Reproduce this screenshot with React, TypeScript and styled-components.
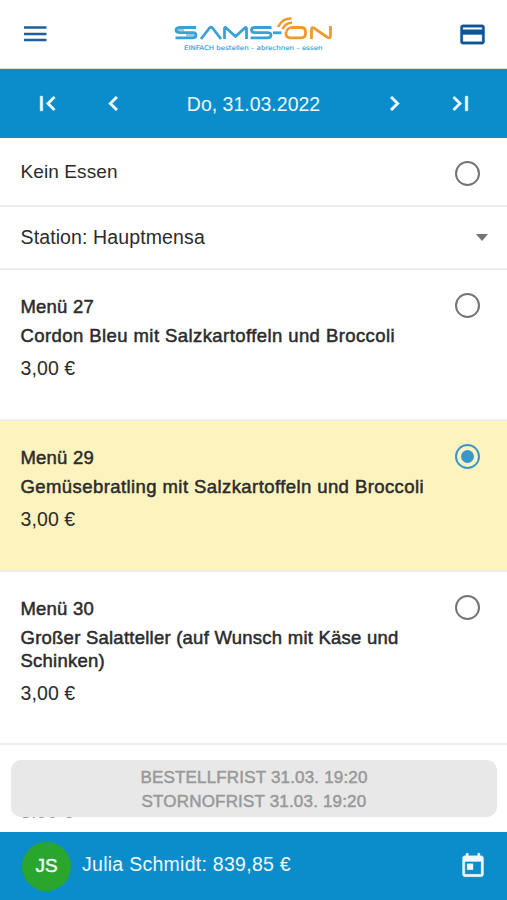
import React from "react";
import styled, { createGlobalStyle } from "styled-components";

const Global = createGlobalStyle`
  * { box-sizing: border-box; }
  body { margin: 0; background: #fff; font-family: "Liberation Sans", Arial, sans-serif; color: #2b2b2b; }
`;

const Screen = styled.div`
  width: 507px;
  height: 900px;
  display: flex;
  flex-direction: column;
  overflow: hidden;
  background: #fff;
`;

const Header = styled.header`
  flex: none;
  height: 69px;
  display: flex;
  align-items: center;
  justify-content: space-between;
  padding: 0 20.5px 0 22px;
  border-bottom: 1px solid #d9e2e2;
`;

const Logo = styled.svg`
  display: block;
  width: 164px;
  height: 42px;
  margin-left: 5px;
`;

const Icon = styled.svg<{ $size: number }>`
  display: block;
  flex: none;
  width: ${(p) => p.$size}px;
  height: ${(p) => p.$size}px;
`;

const DateBar = styled.nav`
  flex: none;
  height: 69px;
  display: grid;
  grid-template-columns: 66px 66px 1fr 66px 66px;
  align-items: center;
  justify-items: center;
  padding: 0 14px;
  background: #0c8dcb;
  color: #eefaff;
`;

const Label = styled.span<{ $size?: number; $track?: number; $strong?: boolean }>`
  display: block;
  white-space: nowrap;
  font-size: ${(p) => p.$size ?? 19}px;
  letter-spacing: ${(p) => p.$track ?? 0}px;
  -webkit-text-stroke: ${(p) => (p.$strong ? "0.5px currentColor" : "0")};
`;

const DateLabel = styled(Label)`
  padding: 1px 0 0 0;
`;

const List = styled.main`
  flex: 1;
  min-height: 0;
  overflow: hidden;
`;

const OptionRow = styled.div<{ $height: number; $inset: number }>`
  height: ${(p) => p.$height}px;
  display: flex;
  align-items: center;
  justify-content: space-between;
  padding: 0 ${(p) => p.$inset}px 0 20.5px;
  border-bottom: 2px solid #ededed;
`;

const MenuRow = styled.article<{ $height: number; $selected?: boolean }>`
  height: ${(p) => p.$height}px;
  display: flex;
  justify-content: space-between;
  align-items: flex-start;
  padding: 22px 25px 0 20.5px;
  border-bottom: 2px solid #ededed;
  background: ${(p) => (p.$selected ? "#fdf3bf" : "#fff")};
`;

const MenuText = styled.div`
  padding-top: 3px;
`;

const Title = styled(Label)`
  line-height: 23px;
  margin-bottom: 6px;
`;

const Dish = styled(Label)`
  line-height: 23px;
`;

const Price = styled(Label)`
  line-height: 23px;
  margin-top: 10px;
`;

const Radio = styled.span<{ $on?: boolean; $top?: number }>`
  flex: none;
  display: grid;
  place-items: center;
  width: 25px;
  height: 25px;
  margin: ${(p) => p.$top ?? 1}px 2px 0 0;
  border: 2.5px solid ${(p) => (p.$on ? "#3997cb" : "#747474")};
  border-radius: 50%;

  &::after {
    content: "";
    width: 13px;
    height: 13px;
    border-radius: 50%;
    background: ${(p) => (p.$on ? "#3997cb" : "transparent")};
  }
`;

const Caret = styled.span`
  border: 7px solid transparent;
  border-width: 7px 6.5px 0;
  border-top-color: #747474;
`;

const BottomArea = styled.section`
  position: relative;
  flex: none;
  height: 87px;
  padding: 15px 10px 0 11px;

  &::after {
    content: "";
    position: absolute;
    inset: auto 0 0 0;
    height: 14px;
    background: #fff;
  }
`;

const Deadline = styled.button`
  position: relative;
  display: flex;
  flex-direction: column;
  align-items: center;
  justify-content: center;
  width: 100%;
  height: 57px;
  padding: 2px 0 0;
  border: 0;
  border-radius: 10px;
  background: #e8e8e8;
  color: #999;
  font-family: inherit;
  line-height: 24px;
`;

const CoveredPrice = styled(Label)`
  position: absolute;
  left: 20.5px;
  bottom: 9px;
  line-height: 22px;
  color: #999;
`;

const Footer = styled.footer`
  flex: none;
  height: 68px;
  display: flex;
  align-items: center;
  padding: 0 20.5px 0 22px;
  background: #0c8dcb;
  color: #eefaff;
`;

const Avatar = styled.span`
  display: grid;
  place-items: center;
  width: 49px;
  height: 49px;
  margin-right: 11px;
  border-radius: 50%;
  background: #2aa52d;
`;

const Balance = styled(Label)`
  flex: 1;
  padding-bottom: 4px;
`;

const Calendar = styled(Icon)`
  margin-bottom: 2px;
`;

type Menu = { title: string; dish: string[]; track: number; height: number; on: boolean };

const menus: Menu[] = [
  { title: "Menü 27", dish: ["Cordon Bleu mit Salzkartoffeln und Broccoli"], track: 0.42, height: 151, on: false },
  { title: "Menü 29", dish: ["Gemüsebratling mit Salzkartoffeln und Broccoli"], track: 0.42, height: 151, on: true },
  { title: "Menü 30", dish: ["Großer Salatteller (auf Wunsch mit Käse und", "Schinken)"], track: 0.24, height: 173, on: false },
];

const Chevron = ({ flip, bar }: { flip?: boolean; bar?: boolean }) => (
  <Icon $size={29} viewBox="0 0 24 24">
    <g transform={flip ? "translate(24 0) scale(-1 1)" : undefined}>
      <path
        fill="currentColor"
        stroke="currentColor"
        strokeWidth="0.5"
        d={bar ? "M18.41 16.59 13.82 12l4.59-4.59L17 6l-6 6 6 6zM6 6h2v12H6z" : "M15.41 7.41 14 6l-6 6 6 6 1.41-1.41L10.83 12z"}
      />
    </g>
  </Icon>
);

const Brand = () => (
  <Logo viewBox="0 0 164 42" fill="none">
    <g stroke="#3ba0d5" strokeWidth="2.8" strokeLinejoin="round">
      <path d="M23 14.500H7Q3 14.500 3 17T7 19.600H20Q23 19.600 23 22.200T20 24.800H2.500" />
      <path d="M3 17H11M13 22.200H22" strokeWidth="2.400" opacity="0.550" />
      <path d="M28 26L36.500 15Q38 13.500 39.500 15L48 26" />
      <path d="M51.500 26V16Q51.500 13.500 53.500 15.200L62.500 23.500L71.500 15.200Q73.500 13.500 73.500 16V26" />
      <path d="M98.500 14.500H82Q78.500 14.500 78.500 17T82 19.600H94.500Q98 19.600 98 22.200T94.500 24.800H77.500" />
      <path d="M100 19.800h8.500" />
    </g>
    <g stroke="#f09a2b" strokeWidth="2.8" strokeLinejoin="round">
      <path d="M119 14.500H128Q132.500 14.500 132.500 18.500V20.800Q132.500 24.800 128 24.800H117.500Q113 24.800 113 20.800V18.500" />
      <path d="M138.500 26V16.500Q138.500 13.500 141 15.200L154 24Q157.500 26 157.500 22.800V13" />
      <path d="M105 14Q109.500 5 118.500 5.500M109.500 16Q112.500 9.700 119 9.700M113.500 18.500Q114.500 14.500 119.500 14.500" strokeWidth="2.500" />
    </g>
    <text x="11" y="36.500" fill="#3ba0d5" stroke="#3ba0d5" strokeWidth="0.150" fontFamily="DejaVu Sans, sans-serif" fontSize="6.300" textLength="138.500" lengthAdjust="spacingAndGlyphs">
      EINFACH bestellen – abrechnen – essen
    </text>
  </Logo>
);

export default function App() {
  return (
    <>
      <Global />
      <Screen>
        <Header>
          <Icon $size={26} viewBox="0 0 26 26">
            <path d="M2 6.500h22.500M2 13h22.500M2 19h22.500" stroke="#1b61a0" strokeWidth="2.600" />
          </Icon>
          <Brand />
          <Icon $size={29} viewBox="0 0 24 24">
            <path
              fill="#0b559b"
              stroke="#0b559b"
              strokeWidth="0.300"
              d="M20 4H4c-1.110 0-1.990.890-1.990 2L2 18c0 1.110.890 2 2 2h16c1.110 0 2-.890 2-2V6c0-1.110-.890-2-2-2m0 14H4v-6h16zm0-10H4V6h16z"
            />
          </Icon>
        </Header>
        <DateBar>
          <Chevron bar />
          <Chevron />
          <DateLabel $size={19.5}>Do, 31.03.2022</DateLabel>
          <Chevron flip />
          <Chevron bar flip />
        </DateBar>
        <List>
          <OptionRow $height={69} $inset={25}>
            <Label $track={0.1}>Kein Essen</Label>
            <Radio $top={3} />
          </OptionRow>
          <OptionRow $height={63} $inset={19}>
            <Label $size={19.5} $track={0.12}>Station: Hauptmensa</Label>
            <Caret />
          </OptionRow>
          {menus.map((m) => (
            <MenuRow key={m.title} $height={m.height} $selected={m.on}>
              <MenuText>
                <Title $strong $size={18.5} $track={0.2}>{m.title}</Title>
                {m.dish.map((line) => (
                  <Dish key={line} $strong $size={18.5} $track={m.track}>{line}</Dish>
                ))}
                <Price $size={19.5} $track={0.1}>3,00 €</Price>
              </MenuText>
              <Radio $on={m.on} />
            </MenuRow>
          ))}
        </List>
        <BottomArea>
          <CoveredPrice>3,00 €</CoveredPrice>
          <Deadline>
            <Label $size={17} $track={0.18} $strong>BESTELLFRIST 31.03. 19:20</Label>
            <Label $size={17} $track={0.18} $strong>STORNOFRIST 31.03. 19:20</Label>
          </Deadline>
        </BottomArea>
        <Footer>
          <Avatar>
            <Label $strong>JS</Label>
          </Avatar>
          <Balance $size={19.5} $track={0.27}>Julia Schmidt: 839,85 €</Balance>
          <Calendar $size={28} viewBox="0 0 24 24">
            <path fill="currentColor" stroke="currentColor" strokeWidth="0.300" d="M19 4h-1V2h-2v2H8V2H6v2H5c-1.110 0-1.990.900-1.990 2L3 20c0 1.100.890 2 2 2h14c1.100 0 2-.900 2-2V6c0-1.100-.900-2-2-2m0 16H5V9h14zM7 11h5v5H7z" />
          </Calendar>
        </Footer>
      </Screen>
    </>
  );
}
